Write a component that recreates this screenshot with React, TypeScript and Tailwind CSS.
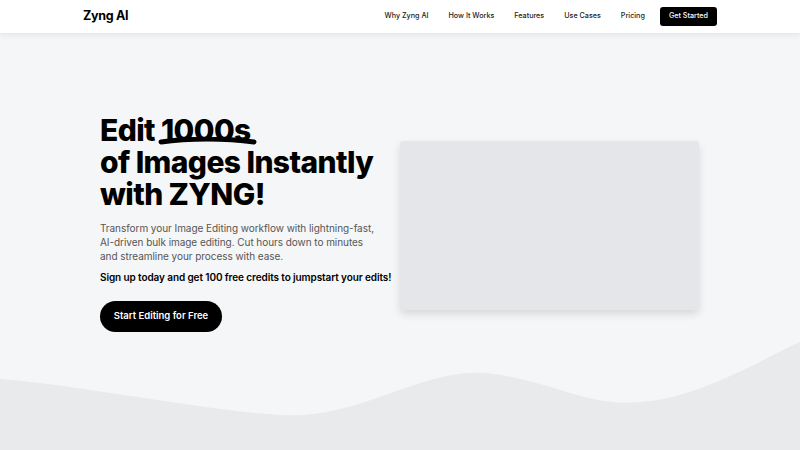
import React from "react";

const navLinks = ["Why Zyng AI", "How It Works", "Features", "Use Cases", "Pricing"];

function Header() {
  return (
    <header className="relative z-10 h-[33px] bg-white shadow-[0_2px_6px_rgba(0,0,0,0.08)]">
      <div className="flex h-full items-center justify-between pl-[83px] pr-[83px]">
        <div className="text-[12.5px] font-bold tracking-tight text-black">Zyng AI</div>
        <nav className="flex items-center">
          {navLinks.map((l) => (
            <a key={l} className="mr-[20px] text-[7.2px] font-medium text-[#222]">
              {l}
            </a>
          ))}
          <a className="ml-[-5px] flex h-[19px] items-center rounded-[3px] bg-black px-[9px] text-[7.2px] font-medium text-white">
            Get Started
          </a>
        </nav>
      </div>
    </header>
  );
}

function Wave() {
  return (
    <svg
      className="absolute bottom-0 left-0 h-[110px] w-full"
      viewBox="0 0 800 110"
      preserveAspectRatio="none"
    >
      <path
        d="M0 39 C 80 45, 200 70, 280 75 C 360 80, 420 28, 485 33 C 545 38, 590 68, 640 62 C 700 58, 760 20, 800 2 L 800 110 L 0 110 Z"
        fill="#e9eaeb"
      />
    </svg>
  );
}

export default function App() {
  return (
    <div
      className="relative h-[450px] w-[800px] overflow-hidden bg-[#f5f6f7] text-black"
      style={{ fontFamily: "Inter, 'Noto Sans', sans-serif" }}
    >
      <Header />
      <Wave />
      <main className="relative flex items-start pl-[100px] pt-[81px]">
        <section className="w-[300px] shrink-0">
          <h1 className="text-[30px] font-extrabold leading-[32px] tracking-[-0.6px]">
            Edit{" "}
            <span className="relative inline-block">
              <span className="relative z-10">1000s</span>
              <svg
                className="absolute bottom-[0px] left-[-3px] h-[9px] w-[99px]"
                viewBox="0 0 99 9"
                preserveAspectRatio="none"
              >
                <path d="M3 5 C 30 1, 68 1, 96 5" stroke="#000" strokeWidth="5" fill="none" strokeLinecap="round" />
              </svg>
            </span>
            <br />
            of Images Instantly
            <br />
            with ZYNG!
          </h1>
          <p className="mt-[11px] w-[282px] text-[10px] leading-[14px] tracking-[-0.05px] text-[#555]">
            Transform your Image Editing workflow with lightning-fast, AI-driven bulk image editing. Cut hours down to minutes and streamline your process with ease.
          </p>
          <p className="mt-[7px] whitespace-nowrap text-[10px] font-semibold leading-[14px] tracking-[-0.1px] text-black">
            Sign up today and get 100 free credits to jumpstart your edits!
          </p>
          <button className="mt-[17px] flex h-[31px] w-[122px] items-center justify-center rounded-full bg-black text-[9.5px] font-semibold text-white">
            Start Editing for Free
          </button>
        </section>
        <div className="mt-[27px] h-[169px] w-[299px] shrink-0 rounded-[3px] bg-[#e5e6e9] shadow-[0_4px_8px_rgba(0,0,0,0.12)]" />
      </main>
    </div>
  );
}
